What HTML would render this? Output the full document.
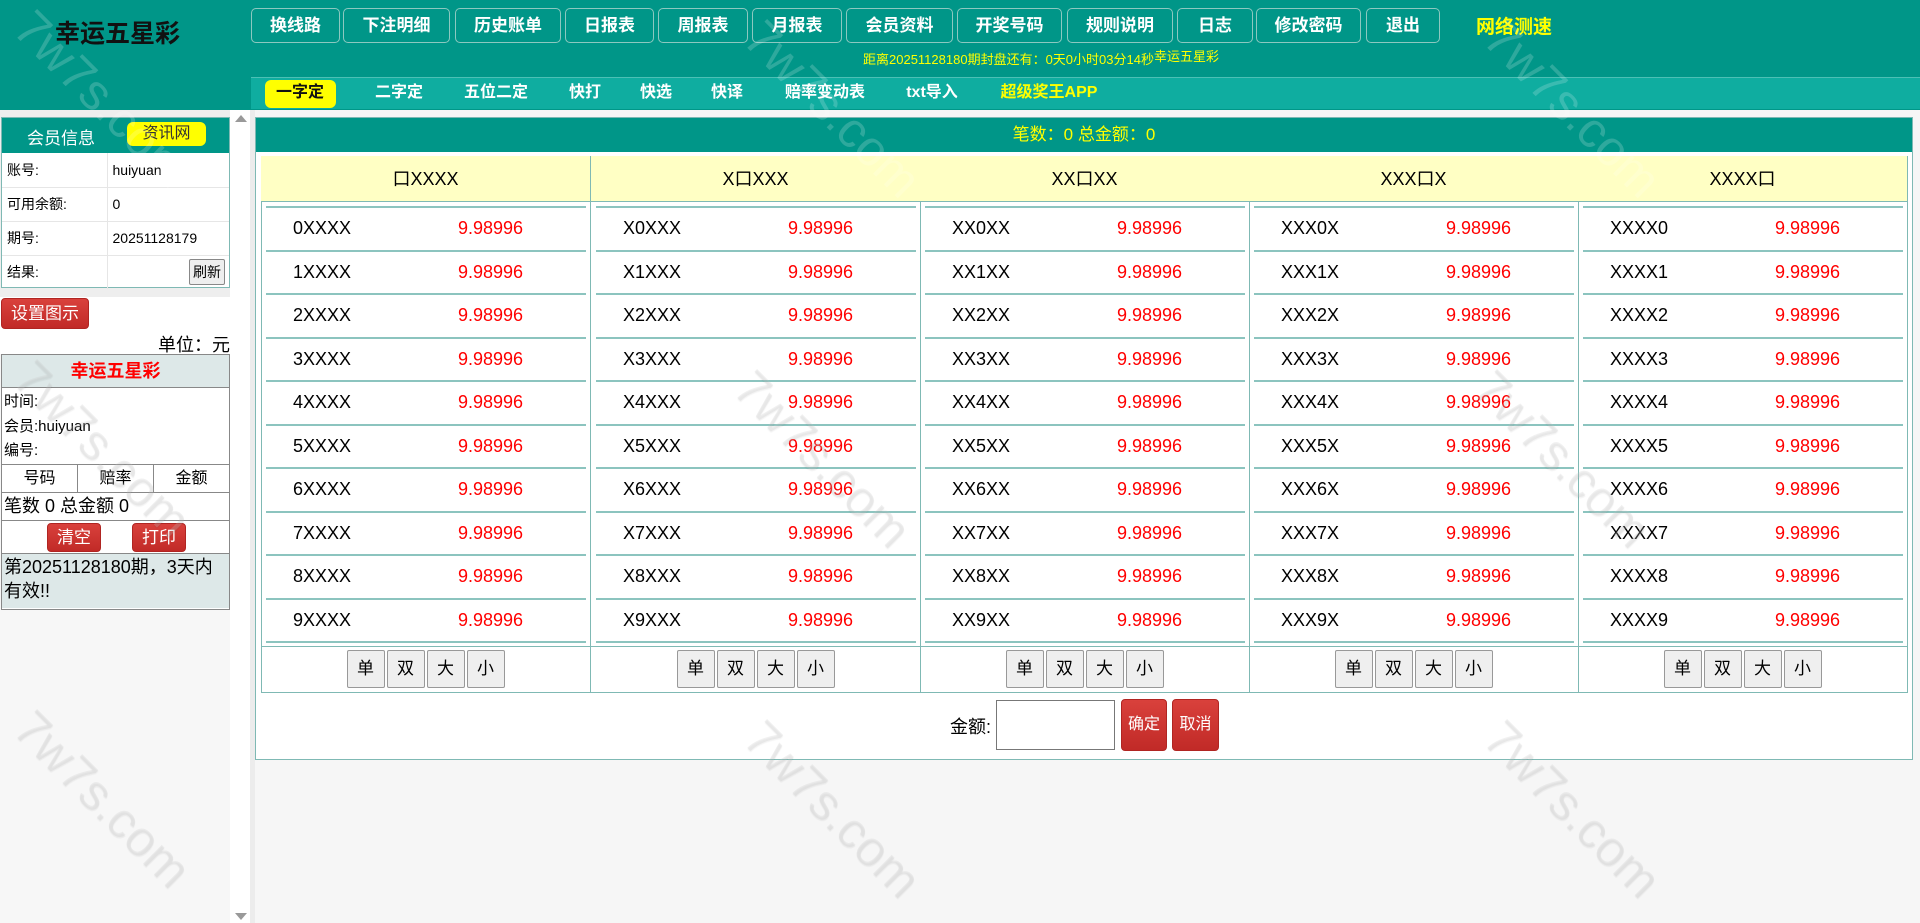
<!DOCTYPE html>
<html><head><meta charset="utf-8"><style>
*{box-sizing:border-box;margin:0;padding:0}
body{width:1920px;height:923px;overflow:hidden;background:#f6f6f6;font-family:"Liberation Sans","Noto Sans CJK SC",sans-serif;position:relative}
.a{position:absolute}
#top{left:0;top:0;width:1920px;height:110px;background:#009688}
.nb{position:absolute;top:8px;height:35px;border:1px solid #8cc8c0;border-radius:5px;color:#fff;font-weight:bold;font-size:17px;text-align:center;line-height:33px}
#tabs{left:251px;top:77px;width:1669px;height:32px;background:#0fada0;border-top:1px solid #4cc0b5}
.tb{position:absolute;top:0;line-height:30px;color:#fff;font-weight:bold;font-size:16px;transform:translateX(-50%);white-space:nowrap}
.wm{position:absolute;font-size:50px;color:rgba(255,255,255,.18);transform:rotate(45deg);font-family:"Liberation Sans",sans-serif;white-space:nowrap}
.wm2{color:rgba(200,200,200,.25);text-shadow:1px 1px 1px rgba(0,0,0,.05)}
.col{position:absolute;top:156px;width:330px;height:536px;border-right:1px solid #7fb9b4}
.hd{height:46px;background:#ffffc4;border-bottom:1px solid #7fb9b4;text-align:center;line-height:46px;font-size:18px}
.rows{padding:4px 4px 0 5px}
.r{height:43.5px;border-top:2px solid #8cc4bf;position:relative;font-size:18px;line-height:41px}
.r .l{position:absolute;left:27px}
.r .o{position:absolute;left:192px;color:#f00}
.last{border-top:2px solid #8cc4bf;height:0}
.btns{position:absolute;top:490px;left:0;width:100%;height:46px;border-top:1px solid #7fb9b4;text-align:center;padding-top:3px}
.btns span{display:inline-block;width:38px;height:38px;border:1px solid #999;border-radius:2px;background:#efefef;margin:0 1px;line-height:36px;font-size:17px}
.red{position:absolute;background:#c9302c;background:linear-gradient(#d9413c,#c12a27);color:#fff;border-radius:4px;border:1px solid #b02522;text-align:center}
.lt td{border-bottom:1px solid #e6e6e6;height:34px;font-size:14px;padding-left:5px}
</style></head><body>
<div id="top" class="a"></div>
<div class="a" style="left:55px;top:14px;font-size:25px;font-weight:bold;color:#111">幸运五星彩</div>
<div class="nb" style="left:251px;width:89px">换线路</div>
<div class="nb" style="left:343px;width:107px">下注明细</div>
<div class="nb" style="left:455px;width:106px">历史账单</div>
<div class="nb" style="left:565px;width:89px">日报表</div>
<div class="nb" style="left:658px;width:90px">周报表</div>
<div class="nb" style="left:752px;width:90px">月报表</div>
<div class="nb" style="left:846px;width:107px">会员资料</div>
<div class="nb" style="left:957px;width:105px">开奖号码</div>
<div class="nb" style="left:1067px;width:106px">规则说明</div>
<div class="nb" style="left:1177px;width:76px">日志</div>
<div class="nb" style="left:1256px;width:105px">修改密码</div>
<div class="nb" style="left:1366px;width:74px">退出</div>
<div class="a" style="left:1476px;top:12px;font-size:19px;font-weight:bold;color:#ff0">网络测速</div>
<div class="a" style="left:863px;top:49px;font-size:13px;color:#ff0">距离20251128180期封盘还有：0天0小时03分14秒<span style="position:relative;top:-3px">幸运五星彩</span></div>
<div id="tabs" class="a">
<div class="a" style="left:14px;top:2px;width:71px;height:28px;background:#ff0;border-radius:6px"></div>
<div class="tb" style="left:49px;color:#111">一字定</div>
<div class="tb" style="left:148px">二字定</div>
<div class="tb" style="left:245px">五位二定</div>
<div class="tb" style="left:334px">快打</div>
<div class="tb" style="left:405px">快选</div>
<div class="tb" style="left:476px">快译</div>
<div class="tb" style="left:574px">赔率变动表</div>
<div class="tb" style="left:681px">txt导入</div>
<div class="tb" style="left:798px;color:#ff0">超级奖王APP</div>
</div>

<!-- left panel -->
<div class="a" style="left:0;top:110px;width:230px;height:187px;background:#eee"></div>
<div class="a" style="left:1px;top:117px;width:229px;height:171px;border:1px solid #7fb9b4;background:#fff">
<div style="height:35px;background:#009688;position:relative">
<div class="a" style="left:25px;top:6px;color:#fff;font-size:17px">会员信息</div>
<div class="a" style="left:125px;top:4px;width:79px;height:24px;background:#ff0;border-radius:6px;text-align:center;line-height:24px;font-size:16px;color:#333">资讯网</div>
</div>
<table class="lt" style="border-collapse:collapse;width:100%">
<tr><td style="width:105px;border-right:1px solid #e6e6e6">账号:</td><td>huiyuan</td></tr>
<tr><td style="border-right:1px solid #e6e6e6">可用余额:</td><td>0</td></tr>
<tr><td style="border-right:1px solid #e6e6e6">期号:</td><td>20251128179</td></tr>
<tr><td style="border-right:1px solid #e6e6e6;border-bottom:0">结果:</td><td style="border-bottom:0;text-align:right;padding-right:4px"><span style="display:inline-block;border:1px solid #888;background:#eee;font-size:14px;padding:2px 3px;border-radius:2px">刷新</span></td></tr>
</table></div>
<div class="a" style="left:0;top:297px;width:230px;height:626px;background:#f7f7f7"></div>
<div class="a" style="left:0;top:297px;width:230px;height:57px;background:#fff"></div>
<div class="red" style="left:1px;top:298px;width:88px;height:31px;line-height:29px;font-size:17px">设置图示</div>
<div class="a" style="right:1690px;top:331px;font-size:18px">单位：元</div>
<div class="a" style="left:1px;top:354px;width:229px;height:256px;border:1px solid #888;background:#fff;font-size:15px">
<div style="height:33px;background:#dde8e8;border-bottom:1px solid #888;text-align:center;color:#f00;font-weight:bold;font-size:18px;line-height:32px">幸运五星彩</div>
<div style="padding-left:2px;line-height:24.5px;height:77px;border-bottom:1px solid #888;padding-top:2px">时间:<br>会员:huiyuan<br>编号:</div>
<div style="display:flex;height:28px;border-bottom:1px solid #888;line-height:27px;font-size:16px;text-align:center"><div style="flex:1;border-right:1px solid #888">号码</div><div style="flex:1;border-right:1px solid #888">赔率</div><div style="flex:1">金额</div></div>
<div style="height:28px;border-bottom:1px solid #888;line-height:27px;font-size:18px;padding-left:2px">笔数 0 总金额 0</div>
<div style="height:33px;border-bottom:1px solid #888;position:relative">
<div class="red" style="left:45px;top:2px;width:54px;height:29px;line-height:27px;font-size:17px">清空</div>
<div class="red" style="left:130px;top:2px;width:54px;height:29px;line-height:27px;font-size:17px">打印</div></div>
<div style="background:#dde8e8;height:54px;font-size:18px;line-height:24px;padding:1px 2px">第20251128180期，3天内有效!!</div>
</div>
<div class="a" style="left:230px;top:110px;width:20px;height:813px;background:#fff"></div>
<div class="a" style="left:235px;top:115px;border-left:6px solid transparent;border-right:6px solid transparent;border-bottom:7px solid #999"></div>
<div class="a" style="left:235px;top:913px;border-left:6px solid transparent;border-right:6px solid transparent;border-top:7px solid #999"></div>
<div class="a" style="left:250px;top:110px;width:5px;height:813px;background:#ececec"></div>

<!-- main -->
<div class="a" style="left:255px;top:117px;width:1658px;height:643px;border:1px solid #7fb9b4;background:#fff"></div>
<div class="a" style="left:256px;top:118px;width:1656px;height:34px;background:#009688;color:#ff0;font-size:17px;text-align:center;line-height:34px">笔数：0 总金额：0</div>
<div class="a" style="left:261px;top:156px;width:1647px;height:537px;border:1px solid #7fb9b4"></div>

<div class="col" style="left:261px"><div class="hd">口XXXX</div><div class="rows">
<div class="r"><span class="l">0XXXX</span><span class="o">9.98996</span></div><div class="r"><span class="l">1XXXX</span><span class="o">9.98996</span></div><div class="r"><span class="l">2XXXX</span><span class="o">9.98996</span></div><div class="r"><span class="l">3XXXX</span><span class="o">9.98996</span></div><div class="r"><span class="l">4XXXX</span><span class="o">9.98996</span></div><div class="r"><span class="l">5XXXX</span><span class="o">9.98996</span></div><div class="r"><span class="l">6XXXX</span><span class="o">9.98996</span></div><div class="r"><span class="l">7XXXX</span><span class="o">9.98996</span></div><div class="r"><span class="l">8XXXX</span><span class="o">9.98996</span></div><div class="r"><span class="l">9XXXX</span><span class="o">9.98996</span></div><div class="last"></div></div>
<div class="btns"><span>单</span><span>双</span><span>大</span><span>小</span></div></div>

<div class="col" style="left:591px"><div class="hd">X口XXX</div><div class="rows">
<div class="r"><span class="l">X0XXX</span><span class="o">9.98996</span></div><div class="r"><span class="l">X1XXX</span><span class="o">9.98996</span></div><div class="r"><span class="l">X2XXX</span><span class="o">9.98996</span></div><div class="r"><span class="l">X3XXX</span><span class="o">9.98996</span></div><div class="r"><span class="l">X4XXX</span><span class="o">9.98996</span></div><div class="r"><span class="l">X5XXX</span><span class="o">9.98996</span></div><div class="r"><span class="l">X6XXX</span><span class="o">9.98996</span></div><div class="r"><span class="l">X7XXX</span><span class="o">9.98996</span></div><div class="r"><span class="l">X8XXX</span><span class="o">9.98996</span></div><div class="r"><span class="l">X9XXX</span><span class="o">9.98996</span></div><div class="last"></div></div>
<div class="btns"><span>单</span><span>双</span><span>大</span><span>小</span></div></div>

<div class="col" style="left:920px"><div class="hd">XX口XX</div><div class="rows">
<div class="r"><span class="l">XX0XX</span><span class="o">9.98996</span></div><div class="r"><span class="l">XX1XX</span><span class="o">9.98996</span></div><div class="r"><span class="l">XX2XX</span><span class="o">9.98996</span></div><div class="r"><span class="l">XX3XX</span><span class="o">9.98996</span></div><div class="r"><span class="l">XX4XX</span><span class="o">9.98996</span></div><div class="r"><span class="l">XX5XX</span><span class="o">9.98996</span></div><div class="r"><span class="l">XX6XX</span><span class="o">9.98996</span></div><div class="r"><span class="l">XX7XX</span><span class="o">9.98996</span></div><div class="r"><span class="l">XX8XX</span><span class="o">9.98996</span></div><div class="r"><span class="l">XX9XX</span><span class="o">9.98996</span></div><div class="last"></div></div>
<div class="btns"><span>单</span><span>双</span><span>大</span><span>小</span></div></div>

<div class="col" style="left:1249px"><div class="hd">XXX口X</div><div class="rows">
<div class="r"><span class="l">XXX0X</span><span class="o">9.98996</span></div><div class="r"><span class="l">XXX1X</span><span class="o">9.98996</span></div><div class="r"><span class="l">XXX2X</span><span class="o">9.98996</span></div><div class="r"><span class="l">XXX3X</span><span class="o">9.98996</span></div><div class="r"><span class="l">XXX4X</span><span class="o">9.98996</span></div><div class="r"><span class="l">XXX5X</span><span class="o">9.98996</span></div><div class="r"><span class="l">XXX6X</span><span class="o">9.98996</span></div><div class="r"><span class="l">XXX7X</span><span class="o">9.98996</span></div><div class="r"><span class="l">XXX8X</span><span class="o">9.98996</span></div><div class="r"><span class="l">XXX9X</span><span class="o">9.98996</span></div><div class="last"></div></div>
<div class="btns"><span>单</span><span>双</span><span>大</span><span>小</span></div></div>

<div class="col" style="left:1578px;width:329px;border-right:0"><div class="hd">XXXX口</div><div class="rows">
<div class="r"><span class="l">XXXX0</span><span class="o">9.98996</span></div><div class="r"><span class="l">XXXX1</span><span class="o">9.98996</span></div><div class="r"><span class="l">XXXX2</span><span class="o">9.98996</span></div><div class="r"><span class="l">XXXX3</span><span class="o">9.98996</span></div><div class="r"><span class="l">XXXX4</span><span class="o">9.98996</span></div><div class="r"><span class="l">XXXX5</span><span class="o">9.98996</span></div><div class="r"><span class="l">XXXX6</span><span class="o">9.98996</span></div><div class="r"><span class="l">XXXX7</span><span class="o">9.98996</span></div><div class="r"><span class="l">XXXX8</span><span class="o">9.98996</span></div><div class="r"><span class="l">XXXX9</span><span class="o">9.98996</span></div><div class="last"></div></div>
<div class="btns"><span>单</span><span>双</span><span>大</span><span>小</span></div></div>

<div class="a" style="left:950px;top:713px;font-size:18px">金额:</div>
<div class="a" style="left:996px;top:700px;width:119px;height:50px;border:1px solid #777;background:#fff"></div>
<div class="red" style="left:1121px;top:699px;width:46px;height:52px;line-height:50px;font-size:16px">确定</div>
<div class="red" style="left:1172px;top:699px;width:47px;height:52px;line-height:50px;font-size:16px">取消</div>

<div class="wm" style="left:-10px;top:70px">7w7s.com</div>
<div class="wm" style="left:720px;top:80px">7w7s.com</div>
<div class="wm" style="left:1460px;top:80px">7w7s.com</div>
<div class="wm wm2" style="left:-10px;top:420px">7w7s.com</div>
<div class="wm wm2" style="left:710px;top:430px">7w7s.com</div>
<div class="wm wm2" style="left:1450px;top:430px">7w7s.com</div>
<div class="wm wm2" style="left:-10px;top:770px">7w7s.com</div>
<div class="wm wm2" style="left:720px;top:780px">7w7s.com</div>
<div class="wm wm2" style="left:1460px;top:780px">7w7s.com</div>
</body></html>
